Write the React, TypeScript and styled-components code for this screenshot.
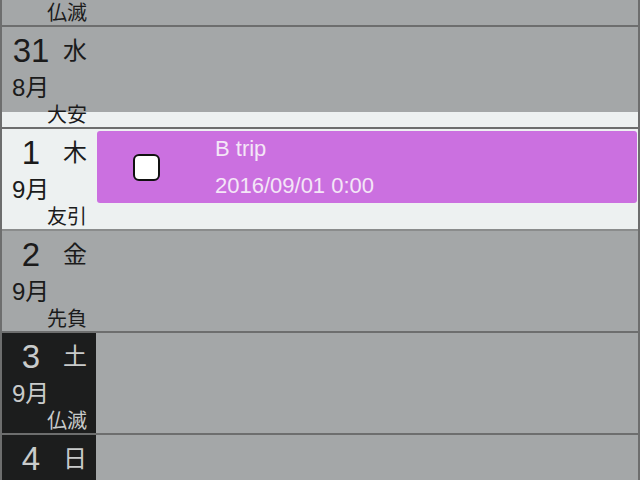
import styled, { createGlobalStyle } from "styled-components";

const GlobalStyle = createGlobalStyle`
  html, body {
    margin: 0;
    padding: 0;
    background: #a4a7a8;
  }
  body {
    font-family: "Liberation Sans", "Noto Sans CJK JP", sans-serif;
  }
`;

const LINE = "#6d6e6e";
const GRAY = "#a4a7a8";
const LIGHT = "#edf1f1";

const Screen = styled.div`
  width: 640px;
  height: 480px;
  overflow: hidden;
  box-sizing: border-box;
  border-left: 2px solid ${LINE};
  border-right: 2px solid ${LINE};
  background: ${GRAY};
`;

// first row is scrolled mostly out of view
const List = styled.div`
  margin-top: -75px;
`;

const DayRow = styled.div<{ $today: boolean; $tail: boolean }>`
  display: grid;
  grid-template-columns: 94px 1fr;
  height: 100px;
  border-bottom: 2px solid ${(p) => (p.$today ? "#8a8c8c" : LINE)};
  background: ${(p) =>
    p.$today
      ? LIGHT
      : p.$tail
      ? `linear-gradient(to bottom, ${GRAY} 85px, ${LIGHT} 85px)`
      : GRAY};
`;

const DateCell = styled.div<{ $holiday: boolean }>`
  display: flex;
  flex-direction: column;
  background: ${(p) => (p.$holiday ? "#1c1d1d" : "transparent")};
  color: ${(p) => (p.$holiday ? "#c9cbcb" : "#1b1b1b")};
`;

const TopLine = styled.div`
  display: flex;
  height: 40px;
  margin-top: 4px;
  line-height: 40px;
`;

const DayNum = styled.span`
  width: 58px;
  text-align: center;
  font-size: 33px;
`;

const Weekday = styled.span`
  width: 30px;
  text-align: center;
  font-size: 24px;
`;

const Month = styled.div`
  font-size: 24px;
  line-height: 34px;
  padding-left: 10px;
`;

const Rokuyo = styled.div`
  font-size: 20px;
  line-height: 20px;
  text-align: right;
  padding-right: 9px;
`;

const Events = styled.div`
  padding: 2px 1px 0 1px;
`;

const EventCard = styled.div<{ $color: string }>`
  display: flex;
  align-items: center;
  height: 72px;
  padding-left: 36px;
  border-radius: 3px;
  background: ${(p) => p.$color};
`;

const CheckBox = styled.div`
  width: 23px;
  height: 23px;
  flex: none;
  background: #ffffff;
  border: 2px solid #111111;
  border-radius: 6px;
`;

const EventText = styled.div`
  margin-left: 55px;
  font-size: 22px;
  line-height: 37px;
  color: #f4e6f7;
`;

type CalEvent = { title: string; start: string; color: string };

type Day = {
  day: number;
  wd: string;
  month: string;
  rokuyo: string;
  today?: boolean;
  tail?: boolean;
  events?: CalEvent[];
};

const days: Day[] = [
  { day: 30, wd: "火", month: "8月", rokuyo: "仏滅" },
  { day: 31, wd: "水", month: "8月", rokuyo: "大安", tail: true },
  {
    day: 1,
    wd: "木",
    month: "9月",
    rokuyo: "友引",
    today: true,
    events: [{ title: "B trip", start: "2016/09/01 0:00", color: "#cb70e0" }],
  },
  { day: 2, wd: "金", month: "9月", rokuyo: "先負" },
  { day: 3, wd: "土", month: "9月", rokuyo: "仏滅" },
  { day: 4, wd: "日", month: "9月", rokuyo: "大安" },
];

export default function App() {
  return (
    <Screen>
      <GlobalStyle />
      <List>
        {days.map((d) => (
          <DayRow key={`${d.month}-${d.day}`} $today={!!d.today} $tail={!!d.tail}>
            <DateCell $holiday={d.wd === "土" || d.wd === "日"}>
              <TopLine>
                <DayNum>{d.day}</DayNum>
                <Weekday>{d.wd}</Weekday>
              </TopLine>
              <Month>{d.month}</Month>
              <Rokuyo>{d.rokuyo}</Rokuyo>
            </DateCell>
            <Events>
              {d.events?.map((ev) => (
                <EventCard key={ev.title} $color={ev.color}>
                  <CheckBox />
                  <EventText>
                    <div>{ev.title}</div>
                    <div>{ev.start}</div>
                  </EventText>
                </EventCard>
              ))}
            </Events>
          </DayRow>
        ))}
      </List>
    </Screen>
  );
}
